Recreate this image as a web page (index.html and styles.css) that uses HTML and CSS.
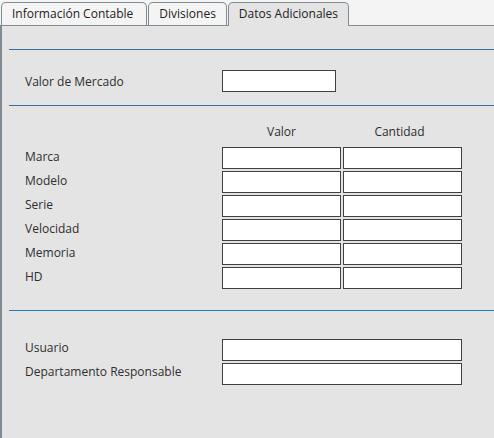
FILE: index.html
```html
<!DOCTYPE html>
<html lang="es">
<head>
<meta charset="utf-8">
<title>Datos Adicionales</title>
<link rel="stylesheet" href="styles.css">
</head>
<body>
<div class="tabs">
  <div class="tab tab-first">Información Contable</div>
  <div class="tab">Divisiones</div>
  <div class="tab active">Datos Adicionales</div>
</div>
<div class="panel">
  <div class="sep dark first"></div>
  <div class="single">
    <label class="lbl">Valor de Mercado</label>
    <div class="input short"></div>
  </div>
  <div class="sep dark mid"></div>
  <div class="grid">
    <span></span><span class="head">Valor</span><span class="head head-right">Cantidad</span>
    <label class="lbl">Marca</label><div class="input"></div><div class="input"></div>
    <label class="lbl">Modelo</label><div class="input"></div><div class="input"></div>
    <label class="lbl">Serie</label><div class="input"></div><div class="input"></div>
    <label class="lbl">Velocidad</label><div class="input"></div><div class="input"></div>
    <label class="lbl">Memoria</label><div class="input"></div><div class="input"></div>
    <label class="lbl">HD</label><div class="input"></div><div class="input"></div>
  </div>
  <div class="sep bright"></div>
  <div class="grid2">
    <label class="lbl">Usuario</label><div class="input"></div>
    <label class="lbl">Departamento Responsable</label><div class="input"></div>
  </div>
</div>
</body>
</html>
```

FILE: styles.css
```css
html, body {
  margin: 0;
  padding: 0;
  height: 100%;
}
body {
  background: #f4f4f4;
  font-family: "Open Sans", "Noto Sans", sans-serif;
  font-size: 12px;
  color: #2e2e2e;
  display: flex;
  flex-direction: column;
  overflow: hidden;
}
.tabs {
  display: flex;
  align-items: flex-end;
  gap: 1px;
  height: 25px;
  padding-left: 1px;
  border-bottom: 1px solid #808c92;
  flex: none;
}
.tab {
  box-sizing: border-box;
  height: 23px;
  padding: 0 10px;
  line-height: 21px;
  border: 1px solid #808c92;
  border-bottom: none;
  border-radius: 5px 5px 0 0;
  background: #f4f4f4;
  color: #222;
  white-space: nowrap;
}
.tab-first {
  padding-right: 13px;
}
.tab.active {
  background: #e4e4e4;
  height: 24px;
  margin-bottom: -1px;
}
.panel {
  flex: 1;
  background: #e4e4e4;
  border-left: 2px solid #808c92;
  padding-left: 7px;
}
.sep {
  height: 1px;
}
.sep.dark {
  background: #3a6f9b;
}
.sep.bright {
  background: #1f7bcc;
  margin-top: 21px;
}
.sep.first {
  margin-top: 23px;
}
.sep.mid {
  margin-top: 13px;
}
.single {
  display: flex;
  align-items: center;
  margin: 20px 0 0 16px;
}
.single .lbl {
  width: 197px;
  margin-top: 1px;
}
.input {
  box-sizing: border-box;
  height: 22px;
  background: #fff;
  border: 1px solid #404040;
}
.input.short {
  width: 114px;
}
.grid {
  display: grid;
  grid-template-columns: 195px 119px 119px;
  grid-template-rows: repeat(7, 22px);
  column-gap: 2px;
  row-gap: 2px;
  margin: 17px 0 0 16px;
}
.head {
  text-align: center;
  line-height: 18px;
  align-self: start;
}
.head-right {
  padding-right: 6px;
}
.lbl {
  align-self: center;
  line-height: 16px;
  white-space: nowrap;
  margin-top: -2px;
}
.grid2 {
  display: grid;
  grid-template-columns: 197px 240px;
  grid-template-rows: 22px 22px;
  row-gap: 2px;
  margin: 28px 0 0 16px;
}
.grid2 .lbl {
  align-self: start;
  margin-top: 0;
  padding-top: 1px;
}
```
